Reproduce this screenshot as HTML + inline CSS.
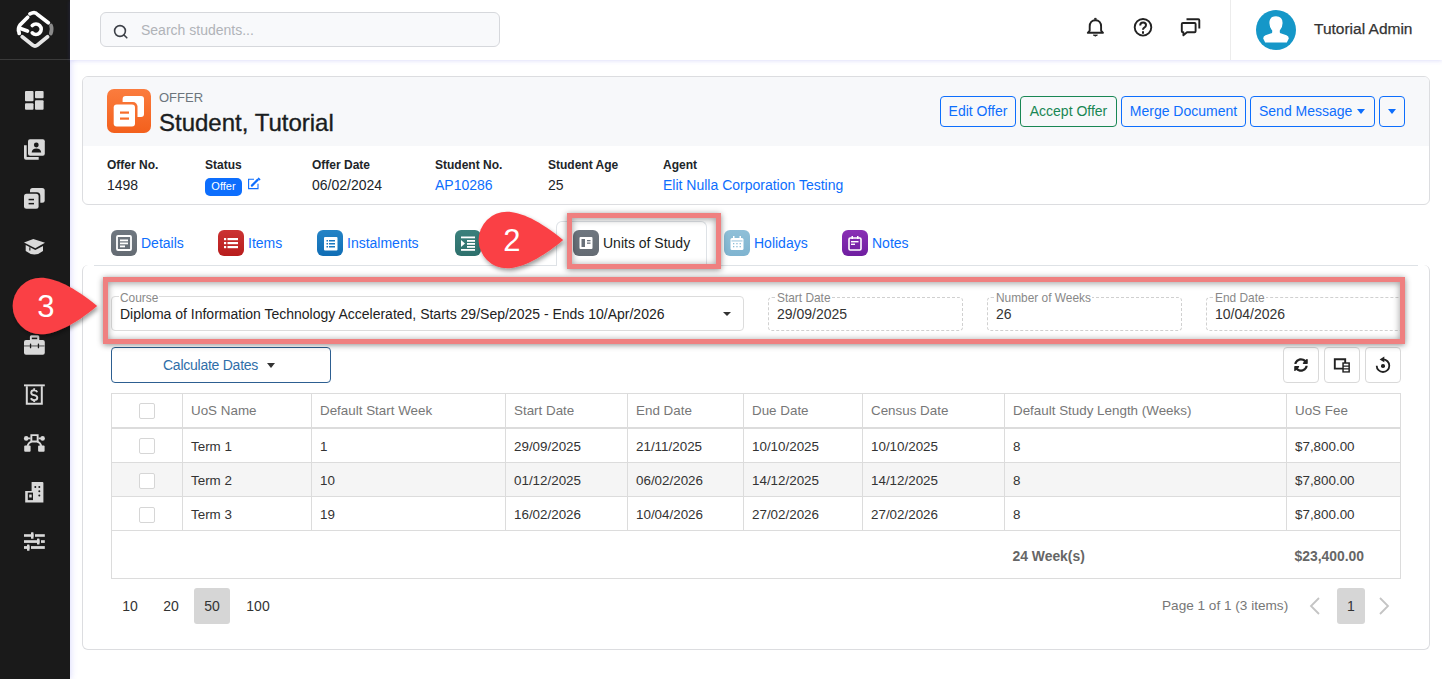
<!DOCTYPE html>
<html><head><meta charset="utf-8">
<style>
*{box-sizing:border-box;margin:0;padding:0}
html,body{width:1442px;height:679px;overflow:hidden;background:#fff;font-family:"Liberation Sans",sans-serif;color:#212529}
.abs{position:absolute}
#sb{position:absolute;left:0;top:0;width:70px;height:679px;background:#1a1a1a;box-shadow:1px 0 6px rgba(100,100,240,.22)}
#sb .sep{position:absolute;left:0;top:59px;width:70px;height:1px;background:#3a3a3a}
#sb svg{position:absolute}
#hd{position:absolute;left:70px;top:0;width:1372px;height:60px;background:#fff;box-shadow:0 1px 4px rgba(100,100,230,.2)}
.search{position:absolute;left:100px;top:12px;width:400px;height:35px;border:1px solid #d6d8dc;border-radius:6px;background:#f8f9fb}
.search span{position:absolute;left:40px;top:9px;font-size:14px;color:#b0b3b8}
.card{position:absolute;border:1px solid #dcdde0;border-radius:6px;background:#fff}
.btn{position:absolute;top:96px;height:31px;border:1px solid #0d6efd;border-radius:4px;color:#0d6efd;font-size:14px;line-height:29px;text-align:center;background:transparent;white-space:nowrap}
.lbl{position:absolute;top:158px;font-size:12px;font-weight:bold;color:#212529;white-space:nowrap}
.val{position:absolute;top:177px;font-size:14px;color:#212529;white-space:nowrap}
.tab{position:absolute;top:230px;height:26px;font-size:14px;color:#0d6efd;white-space:nowrap}
.ticon{position:absolute;width:26px;height:26px;border-radius:6px}
.tlbl{position:absolute;top:5px;font-size:14px}
.fld{position:absolute;top:297px;height:34px;border:1px dashed #d0d0d0;border-radius:4px}
.fld .fl{position:absolute;left:7px;top:-6px;font-size:11.9px;color:#888;background:#fff;padding:0 1px;line-height:13px}
.fld .fv{position:absolute;left:8px;top:8px;font-size:14px;color:#333}
table{border-collapse:collapse;position:absolute;left:111px;top:393px;font-size:13.4px;color:#333}
td,th{border:1px solid #dcdcdc;text-align:left;padding:2px 8px 0;font-weight:normal;height:34px}
th{color:#777;padding-top:1px!important}
.cb{display:block;margin-left:19px;width:16px;height:16px;border:1px solid #d6d6d6;border-radius:2px;background:#fff}
tr.hr th{border-bottom:2px solid #dcdcdc}
tr.ft td{height:48px;font-size:13.9px}
.pg{position:absolute;top:588px;height:36px;line-height:36px;font-size:14px;color:#333;text-align:center}
</style></head><body>
<div id="sb">
  <svg class="abs" style="left:15px;top:9px" width="40" height="40" viewBox="0 0 40 40" fill="none" stroke-linecap="round" stroke-width="3.7">
    <path d="M15 4.8 Q20 2 22.5 5.5 L33.3 13.7" stroke="#fff"/>
    <path d="M12.7 8.2 L5 16 Q2.5 19.5 4 23 L4.2 24.5" stroke="#fff"/>
    <path d="M5.5 19.5 L12.5 22" stroke="#fff"/>
    <path d="M7.2 27.8 L17.5 36 Q20 38 22.5 36 L32.6 27.8" stroke="#e6e6e6"/>
    <path d="M36 16.5 Q37.5 20 35.8 24.5" stroke="#8a8a8a"/>
    <path d="M17.3 16.5 A5.2 5.2 0 1 1 17.3 23.9" stroke="#fff"/>
  </svg>
  <div class="sep"></div>
  <svg class="abs" style="left:0;top:0" width="70" height="679" viewBox="0 0 70 679">
   <g fill="#d9d9d9">
    <rect x="25" y="91" width="8.5" height="10.3" rx="1"/><rect x="35" y="91" width="8.6" height="7.2" rx="1"/><rect x="25" y="103.3" width="8.5" height="6.4" rx="1"/><rect x="35" y="100.2" width="8.6" height="9.5" rx="1"/>
    <rect x="28" y="139.2" width="16.8" height="16.6" rx="2"/>
    <path d="M24 145.2 h2.7 v11.8 h12 v2.8 h-12.7 q-2 0 -2 -2z"/>
    <rect x="30" y="187.9" width="14.7" height="14.8" rx="2.5"/>
    <path d="M24 242.6 L33.3 239 L45 242.8 L35.3 248.3z"/>
    <path d="M25.7 245 L35.3 249.9 L43 246 V251 Q34.5 258 25.7 251z"/>
    <rect x="29.9" y="335.3" width="9.4" height="6" rx="1.5"/>
    <rect x="24" y="340" width="20.8" height="14.7" rx="2"/>
    <rect x="24" y="384.4" width="20.8" height="1.9"/>
    <path d="M25.8 386.3 h17 v18.4 h-17z M27.8 386.3 v16.4 h13 v-16.4z" fill-rule="evenodd"/>
    <path d="M30.4 434.2 h8.2 v8.2 h-8.2z M32.3 436.1 v4.4 h4.4 v-4.4z" fill-rule="evenodd"/>
    <circle cx="26.2" cy="438.4" r="2.3"/><circle cx="42.6" cy="438.4" r="2.3"/>
    <rect x="24.2" y="445.5" width="6.4" height="6.2" rx="1"/><rect x="38.1" y="445.5" width="6.5" height="6.2" rx="1"/>
    <path d="M31.6 482 h10.8 q1 0 1 1 v19.6 h-18.2 v-11.7 h6.4z"/>
    <rect x="24" y="534.2" width="9.5" height="2.6"/><rect x="35" y="534.2" width="9.8" height="2.6"/><rect x="24" y="540.2" width="15.5" height="2.7"/><rect x="41" y="540.2" width="3.8" height="2.7"/><rect x="24" y="546.1" width="5.5" height="2.8"/><rect x="31" y="546.1" width="13.8" height="2.8"/>
   </g>
   <g fill="none" stroke="#d9d9d9" stroke-width="1.8"><path d="M27 438.4 H30.5 M38.5 438.4 H42"/><path d="M27.5 446 Q28.5 442.5 31.5 441.6 M41.3 446 Q40.3 442.5 37.3 441.6"/></g>
   <g fill="#1a1a1a">
    <circle cx="36.3" cy="145" r="2.4"/><path d="M31.6 152.4 Q32 148.6 36.4 148.6 Q40.8 148.6 41.2 152.4z"/>
    <rect x="22.3" y="192.2" width="18" height="18.2" rx="3.5"/>
    
    <rect x="31.8" y="337.6" width="5.4" height="1.6" fill="#1a1a1a"/><rect x="24" y="345" width="20.8" height="1.8" fill="#8c8c8c"/><rect x="29.9" y="343.5" width="1.3" height="4.8" rx=".6"/><rect x="37.8" y="343.5" width="1.3" height="4.8" rx=".6"/>
    <rect x="27.8" y="492.6" width="5.2" height="7.5"/>
    <circle cx="35.3" cy="487.1" r="1"/><circle cx="39.3" cy="487.1" r="1"/><circle cx="39.3" cy="491.3" r="1"/><circle cx="39.3" cy="495.4" r="1"/>
    
   </g>
   <g fill="#d9d9d9">
    <rect x="24" y="193.8" width="14.6" height="15" rx="2.5"/>
    <rect x="29.2" y="494.5" width="2.5" height="3" />
    <rect x="31" y="532.2" width="2.5" height="6.6" rx=".5"/><rect x="37" y="538.4" width="2.5" height="6.2" rx=".5"/><rect x="27" y="544.4" width="2.5" height="6.4" rx=".5"/>
   </g>
   <g fill="#1a1a1a"><rect x="28.6" y="198.8" width="5.4" height="1.5"/><rect x="28.6" y="202.9" width="5.4" height="1.5"/><rect x="29.3" y="247.3" width="1.1" height="3.3"/></g>
   <path d="M37.2 392.2 Q36.6 390.3 34.2 390.3 Q31.2 390.3 31.2 392.7 Q31.2 394.6 34.2 395.1 Q37.3 395.6 37.3 397.8 Q37.3 400.1 34.2 400.1 Q31.7 400.1 31 398.1 M34.2 388.2 v2.1 M34.2 400.1 v2" fill="none" stroke="#d9d9d9" stroke-width="1.9"/>
  </svg>
</div>
<div id="hd"></div>
<div class="search">
  <svg class="abs" style="left:12px;top:11px" width="16" height="16" viewBox="0 0 16 16" fill="none" stroke="#3d4148" stroke-width="1.6"><circle cx="7" cy="7" r="5.4"/><path d="M11 11 L13.8 13.8" stroke-linecap="round"/></svg>
  <span>Search students...</span>
</div>
<!-- header right -->
<svg class="abs" style="left:1080px;top:12px" width="130" height="30" viewBox="1080 12 130 30" fill="none" stroke="#222" stroke-width="1.9" stroke-linejoin="round">
  <path d="M1095.4 20.2 c-3.5 0 -5.7 2.7 -5.7 6.2 v4.2 l-1.9 2.2 h15.2 l-1.9 -2.2 v-4.2 c0 -3.5 -2.2 -6.2 -5.7 -6.2z"/>
  <path d="M1094.3 19.2 L1095.4 17.9 L1096.5 19.2z" fill="#222" stroke-width="1"/>
  <path d="M1093.4 35.1 Q1095.4 37.1 1097.4 35.1z" fill="#222" stroke-width="1"/>
  <circle cx="1143" cy="27.3" r="8.3"/>
  <path d="M1140.2 25.4 q0 -3 2.9 -3 q2.9 0 2.9 2.7 q0 1.6 -1.7 2.5 q-1.3 .7 -1.3 2.2" stroke-width="2"/>
  <path d="M1183 23 h11.6 q1 0 1 1 v7.3 q0 1 -1 1 h-7.6 l-3.6 3 v-3 h-0.4 q-1.2 0 -1.2 -1 v-7.3 q0 -1 1.2 -1z"/>
  <path d="M1186.5 19.2 h11.8 q1 0 1 1 v8.3"/>
</svg>
<div class="abs" style="left:1141.9px;top:31.2px;width:2.5px;height:2.5px;background:#222;border-radius:1px"></div>

<div class="abs" style="left:1230px;top:0;width:1px;height:60px;background:#ececec"></div>
<div class="abs" style="left:1256px;top:10px;width:40px;height:40px;border-radius:50%;background:#1597c8;overflow:hidden"><svg width="40" height="40" viewBox="0 0 40 40" fill="#fff"><path d="M20 6.3 Q26.6 6.3 26.6 13 Q26.6 17.5 23.8 20.5 L23.6 22.6 L20 23.6 L16.4 22.6 L16.2 20.5 Q13.4 17.5 13.4 13 Q13.4 6.3 20 6.3z"/><path d="M16.3 21.6 L20 22.4 L23.7 21.6 L23.9 22.9 L30.5 25.3 Q32.8 26.3 32.8 28.5 L30.8 32.4 H9.2 L7.2 28.5 Q7.2 26.3 9.5 25.3 L16.1 22.9z"/></svg></div>
<div class="abs" style="left:1314px;top:20px;font-size:15.5px;color:#333;-webkit-text-stroke:.25px #333">Tutorial Admin</div>

<!-- offer card -->
<div class="card" style="left:82px;top:76px;width:1348px;height:129px;overflow:hidden">
  <div class="abs" style="left:0;top:0;width:1348px;height:69px;background:#f7f8fa"></div>
</div>
<div class="abs" style="left:107px;top:89px;width:44px;height:44px;border-radius:7px;background:linear-gradient(180deg,#fb7c3e,#f3601c)"><svg width="44" height="44" viewBox="0 0 44 44"><defs><mask id="om"><rect width="44" height="44" fill="#fff"/><rect x="4.2" y="13.1" width="26.3" height="26.8" rx="4.5" fill="#000"/></mask></defs><rect x="15.6" y="7.1" width="21.4" height="20.9" rx="3" fill="#fff" mask="url(#om)"/><rect x="6.7" y="15.6" width="21.3" height="21.8" rx="3" fill="#fff"/><rect x="13" y="22.5" width="9" height="2.2" fill="#f76d2a"/><rect x="13" y="28.5" width="9" height="2.2" fill="#f76d2a"/></svg></div>
<div class="abs" style="left:159px;top:90px;font-size:13px;color:#6c757d">OFFER</div>
<div class="abs" style="left:159px;top:109px;font-size:24px;color:#1a1d21;-webkit-text-stroke:.35px #1a1d21">Student, Tutorial</div>
<div class="btn" style="left:940px;width:76px">Edit Offer</div>
<div class="btn" style="left:1020px;width:97px;border-color:#198754;color:#198754">Accept Offer</div>
<div class="btn" style="left:1121px;width:125px">Merge Document</div>
<div class="btn" style="left:1250px;width:125px;text-align:left;padding-left:8px">Send Message</div><div class="abs" style="left:1357px;top:109px;border-left:4.5px solid transparent;border-right:4.5px solid transparent;border-top:5px solid #0d6efd"></div><div class="abs" style="left:1388px;top:109px;border-left:4.5px solid transparent;border-right:4.5px solid transparent;border-top:5px solid #0d6efd"></div>
<div class="btn" style="left:1379px;width:26px"></div>

<div class="lbl" style="left:107px">Offer No.</div>
<div class="lbl" style="left:205px">Status</div>
<div class="lbl" style="left:312px">Offer Date</div>
<div class="lbl" style="left:435px">Student No.</div>
<div class="lbl" style="left:548px">Student Age</div>
<div class="lbl" style="left:663px">Agent</div>
<div class="val" style="left:107px">1498</div>
<div class="abs" style="left:205px;top:178px;width:37px;height:18px;border-radius:5px;background:#0d6efd;color:#fff;font-size:11px;line-height:17px;text-align:center">Offer</div>
<svg class="abs" style="left:247px;top:177px" width="14" height="14" viewBox="0 0 14 14" fill="none" stroke="#0d6efd"><path d="M7 2.3 H1.6 V11.6 H11 V6.8" stroke-width="1.1"/><path d="M4.9 8.6 L10.6 2.9" stroke-width="2.2" stroke-linecap="round"/><path d="M11.6 1.5 L12.6 2.5" stroke-width="1.7" stroke-linecap="round"/></svg>
<div class="val" style="left:312px">06/02/2024</div>
<div class="val" style="left:435px;color:#0d6efd">AP10286</div>
<div class="val" style="left:548px">25</div>
<div class="val" style="left:663px;color:#0d6efd">Elit Nulla Corporation Testing</div>

<!-- tabs -->
<div class="abs" style="left:94px;top:265px;width:1324px;height:1px;background:#dee2e6"></div>
<div class="abs" style="left:556px;top:221px;width:151px;height:45px;border:1px solid #dee2e6;border-bottom:none;border-radius:6px 6px 0 0;background:#fff"></div>


<!-- tab items -->
<div class="ticon" style="left:111px;top:230px;background:linear-gradient(#6f7780,#646b73)"><svg width="26" height="26" viewBox="0 0 26 26"><rect x="6" y="6" width="14" height="14" rx="1" fill="none" stroke="#fff" stroke-width="1.8"/><rect x="9" y="9.5" width="8" height="1.8" fill="#fff"/><rect x="9" y="12.5" width="8" height="1.8" fill="#fff"/><rect x="9" y="15.5" width="5" height="1.8" fill="#fff"/></svg></div>
<div class="abs" style="left:141px;top:235px;font-size:14px;color:#0d6efd">Details</div>
<div class="ticon" style="left:218px;top:230px;background:linear-gradient(#cc3333,#b71c1c)"><svg width="26" height="26" viewBox="0 0 26 26" fill="#fff"><rect x="6" y="8" width="2.2" height="2.2"/><rect x="6" y="12" width="2.2" height="2.2"/><rect x="6" y="16" width="2.2" height="2.2"/><rect x="9.5" y="8" width="10.5" height="2.2"/><rect x="9.5" y="12" width="10.5" height="2.2"/><rect x="9.5" y="16" width="10.5" height="2.2"/></svg></div>
<div class="abs" style="left:248px;top:235px;font-size:14px;color:#0d6efd">Items</div>
<div class="ticon" style="left:317px;top:230px;background:linear-gradient(#2584c6,#0f6db5)"><svg width="26" height="26" viewBox="0 0 26 26"><rect x="7" y="7" width="13.5" height="13.5" rx="1" fill="#fff"/><g fill="#1a78c0"><rect x="9.5" y="10" width="1.5" height="1.5"/><rect x="9.5" y="13" width="1.5" height="1.5"/><rect x="9.5" y="16" width="1.5" height="1.5"/><rect x="12" y="10" width="6" height="1.5"/><rect x="12" y="13" width="6" height="1.5"/><rect x="12" y="16" width="6" height="1.5"/></g></svg></div>
<div class="abs" style="left:347px;top:235px;font-size:14px;color:#0d6efd">Instalments</div>
<div class="ticon" style="left:455px;top:230px;background:linear-gradient(#3b807c,#2d706c)"><svg width="26" height="26" viewBox="0 0 26 26" fill="#fff"><rect x="6" y="6.5" width="14" height="1.8"/><rect x="12" y="10" width="8" height="1.8"/><rect x="12" y="13" width="8" height="1.8"/><rect x="12" y="16" width="8" height="1.8"/><rect x="6" y="19" width="14" height="1.8"/><path d="M6 10 L10 13.5 L6 17z"/></svg></div>
<div class="ticon" style="left:573px;top:230px;background:linear-gradient(#6f7780,#646b73)"><svg width="26" height="26" viewBox="0 0 26 26"><rect x="6.5" y="7" width="13" height="12" rx="1" fill="#fff"/><rect x="8.5" y="9" width="3.5" height="8" fill="#6a717a"/><rect x="14" y="10" width="3.5" height="1.3" fill="#6a717a"/><rect x="14" y="12.5" width="3.5" height="1.3" fill="#6a717a"/></svg></div>
<div class="abs" style="left:603px;top:235px;font-size:14px;color:#1a1d21">Units of Study</div>
<div class="ticon" style="left:724px;top:230px;background:linear-gradient(#8fc0d8,#7fb4d0)"><svg width="26" height="26" viewBox="0 0 26 26" fill="#fff"><rect x="6.5" y="8" width="13" height="12" rx="1.5"/><rect x="9" y="6" width="1.5" height="3"/><rect x="15.5" y="6" width="1.5" height="3"/><g fill="#8cbcd6"><rect x="7.5" y="10.5" width="11" height=".9"/><rect x="9" y="13" width="1.3" height="1.3"/><rect x="12.3" y="13" width="1.3" height="1.3"/><rect x="15.6" y="13" width="1.3" height="1.3"/><rect x="9" y="16" width="1.3" height="1.3"/><rect x="12.3" y="16" width="1.3" height="1.3"/><rect x="15.6" y="16" width="1.3" height="1.3"/></g></svg></div>
<div class="abs" style="left:754px;top:235px;font-size:14px;color:#0d6efd">Holidays</div>
<div class="ticon" style="left:842px;top:230px;background:linear-gradient(#8a2fb5,#6f1ea0)"><svg width="26" height="26" viewBox="0 0 26 26"><rect x="7" y="8" width="12" height="12" rx="1.2" fill="none" stroke="#fff" stroke-width="1.6"/><rect x="9.5" y="6" width="1.5" height="3" fill="#fff"/><rect x="15" y="6" width="1.5" height="3" fill="#fff"/><rect x="9" y="11" width="7.5" height="1.4" fill="#fff"/><rect x="9" y="13.6" width="4" height="1.4" fill="#fff"/></svg></div>
<div class="abs" style="left:872px;top:235px;font-size:14px;color:#0d6efd">Notes</div>

<!-- content card -->
<div class="abs" style="left:82px;top:265px;width:1348px;height:385px;border:1px solid #dcdde0;border-top-width:0;border-radius:6px"></div>


<!-- course fields -->
<div class="abs" style="left:111px;top:296px;width:633px;height:35px;border:1px solid #dcdcdc;border-radius:4px"></div>
<div class="abs" style="left:119px;top:292px;font-size:11.9px;color:#888;background:#fff;padding:0 1px;line-height:13px">Course</div>
<div class="abs" style="left:120px;top:306px;font-size:14px;color:#222;white-space:nowrap">Diploma of Information Technology Accelerated, Starts 29/Sep/2025 - Ends 10/Apr/2026</div>
<div class="abs" style="left:723px;top:312px;width:0;height:0;border-left:4.5px solid transparent;border-right:4.5px solid transparent;border-top:4.5px solid #333"></div>
<div class="fld" style="left:768px;width:195px"><span class="fl">Start Date</span><span class="fv">29/09/2025</span></div>
<div class="fld" style="left:987px;width:195px"><span class="fl">Number of Weeks</span><span class="fv">26</span></div>
<div class="fld" style="left:1206px;width:198px"><span class="fl">End Date</span><span class="fv">10/04/2026</span></div>

<!-- calculate dates -->
<div class="abs" style="left:111px;top:347px;width:220px;height:36px;border:1px solid #2d5f91;border-radius:4px"></div>
<div class="abs" style="left:163px;top:357px;font-size:14px;letter-spacing:-.25px;color:#2f6ea8">Calculate Dates</div>
<div class="abs" style="left:266.5px;top:363px;width:0;height:0;border-left:4.5px solid transparent;border-right:4.5px solid transparent;border-top:5px solid #333"></div>

<!-- toolbar buttons -->
<svg class="abs" style="left:1283px;top:347px" width="118" height="36" viewBox="1283 347 118 36" fill="none" stroke="#222" stroke-width="2">
  <path fill="#222" stroke="none" transform="translate(1294 358) scale(0.0273)" d="M370.72 133.28C339.458 104.008 298.888 87.962 255.848 88c-77.458.068-144.328 53.178-162.791 126.850-1.344 5.363-6.122 9.150-11.651 9.150H24.103c-7.498 0-13.194-6.807-11.807-14.176C33.933 94.924 134.813 8 256 8c66.448 0 126.791 26.136 171.315 68.685L463.030 40.970C478.149 25.851 504 36.559 504 57.941V192c0 13.255-10.745 24-24 24H345.941c-21.382 0-32.090-25.851-16.971-40.971l41.750-41.749zM32 296h134.059c21.382 0 32.090 25.851 16.971 40.971l-41.750 41.750c31.262 29.273 71.835 45.319 114.876 45.280 77.418-.070 144.315-53.144 162.787-126.849 1.344-5.363 6.122-9.150 11.651-9.150h57.304c7.498 0 13.194 6.807 11.807 14.176C478.067 417.076 377.187 504 256 504c-66.448 0-126.791-26.136-171.315-68.685L48.970 471.030C33.851 486.149 8 475.441 8 454.059V320c0-13.255 10.745-24 24-24z"/>
  <path d="M1334.8 359.2 h10.4 v9.4 h-10.4z" stroke-width="1.9"/>
  <rect x="1342.3" y="362.3" width="7.6" height="10.3" fill="#222" stroke="none"/>
  <path d="M1343.8 364.6 h4.6 M1343.8 367.5 h4.6 M1343.8 370.4 h4.6" stroke="#fff" stroke-width="1.7"/>
  <path d="M1383 359.4 A6.3 6.3 0 1 1 1376.7 365.7" stroke-width="1.8"/>
  <path d="M1384.3 356.6 L1379.6 359.4 L1384.3 362.2z" fill="#222" stroke="none"/>
</svg>
<div class="abs" style="left:1381.2px;top:364.2px;width:3.6px;height:3.6px;border-radius:50%;background:#222"></div>

<div class="abs" style="left:1283px;top:347px;width:36px;height:36px;border:1px solid #d9d9d9;border-radius:4px"></div>
<div class="abs" style="left:1324px;top:347px;width:36px;height:36px;border:1px solid #d9d9d9;border-radius:4px"></div>
<div class="abs" style="left:1365px;top:347px;width:36px;height:36px;border:1px solid #d9d9d9;border-radius:4px"></div>

<table>
<tr class="hr"><th style="width:71px"><span class="cb"></span></th><th style="width:129px">UoS Name</th><th style="width:194px">Default Start Week</th><th style="width:122px">Start Date</th><th style="width:116px">End Date</th><th style="width:119px">Due Date</th><th style="width:142px">Census Date</th><th style="width:282px">Default Study Length (Weeks)</th><th style="width:114px">UoS Fee</th></tr>
<tr class="r1" style="height:35px"><td><span class="cb"></span></td><td>Term 1</td><td>1</td><td>29/09/2025</td><td>21/11/2025</td><td>10/10/2025</td><td>10/10/2025</td><td>8</td><td>$7,800.00</td></tr>
<tr style="background:#f5f5f5"><td><span class="cb"></span></td><td>Term 2</td><td>10</td><td>01/12/2025</td><td>06/02/2026</td><td>14/12/2025</td><td>14/12/2025</td><td>8</td><td>$7,800.00</td></tr>
<tr><td><span class="cb"></span></td><td>Term 3</td><td>19</td><td>16/02/2026</td><td>10/04/2026</td><td>27/02/2026</td><td>27/02/2026</td><td>8</td><td>$7,800.00</td></tr>
<tr class="ft"><td colspan="7" style="border-right:none"></td><td style="border-left:none;border-right:none;font-weight:bold;color:#666">24 Week(s)</td><td style="border-left:none;font-weight:bold;color:#666">$23,400.00</td></tr>
</table>


<!-- pager -->
<div class="pg" style="left:113px;width:34px">10</div>
<div class="pg" style="left:154px;width:34px">20</div>
<div class="pg" style="left:194px;width:36px;background:#d6d6d6;border-radius:3px">50</div>
<div class="pg" style="left:238px;width:40px">100</div>
<div class="abs" style="left:1162px;top:598px;font-size:13.6px;color:#777">Page 1 of 1 (3 items)</div>
<svg class="abs" style="left:1308px;top:596px" width="14" height="20" viewBox="0 0 14 20" fill="none" stroke="#c4c4c4" stroke-width="1.8"><path d="M11 2 L3 10 L11 18"/></svg>
<div class="pg" style="left:1337px;width:28px;background:#d6d6d6;border-radius:3px">1</div>
<svg class="abs" style="left:1377px;top:596px" width="14" height="20" viewBox="0 0 14 20" fill="none" stroke="#c4c4c4" stroke-width="1.8"><path d="M3 2 L11 10 L3 18"/></svg>


<!-- annotations -->
<div class="abs" style="left:567px;top:213px;width:154px;height:56px;border:5px solid #ef8080;box-shadow:0 1px 6px rgba(0,0,0,.45), inset 0 1px 7px rgba(0,0,0,.4)"></div>
<div class="abs" style="left:103px;top:277px;width:1302px;height:67px;border:5px solid #ef8080;box-shadow:0 1px 6px rgba(0,0,0,.45), inset 0 1px 7px rgba(0,0,0,.4)"></div>



<svg class="abs" style="left:475.15px;top:207.5px;overflow:visible" width="100" height="70" viewBox="475.15 207.5 100 70"><defs><filter id="sh2" x="-20%" y="-30%" width="150%" height="170%"><feDropShadow dx="1.5" dy="2.5" stdDeviation="2.2" flood-color="#000" flood-opacity=".4"/></filter></defs><path filter="url(#sh2)" d="M507.15 211.15 C520.15 211.15 540.15 220.0 563.35 239.5 C540.15 259.0 520.15 267.85 507.15 267.85 A28.35 28.35 0 0 1 507.15 211.15Z" fill="#fa4044"/><text x="512.15" y="250.2" font-family="Liberation Sans" font-size="31" fill="#fff" text-anchor="middle">2</text></svg>
<svg class="abs" style="left:8.799999999999997px;top:273.5px;overflow:visible" width="100" height="70" viewBox="8.799999999999997 273.5 100 70"><defs><filter id="sh3" x="-20%" y="-30%" width="150%" height="170%"><feDropShadow dx="1.5" dy="2.5" stdDeviation="2.2" flood-color="#000" flood-opacity=".4"/></filter></defs><path filter="url(#sh3)" d="M40.8 277.15 C53.8 277.15 73.8 286.0 97.0 305.5 C73.8 325.0 53.8 333.85 40.8 333.85 A28.35 28.35 0 0 1 40.8 277.15Z" fill="#fa4044"/><text x="45.8" y="316.5" font-family="Liberation Sans" font-size="31" fill="#fff" text-anchor="middle">3</text></svg>
</body></html>
